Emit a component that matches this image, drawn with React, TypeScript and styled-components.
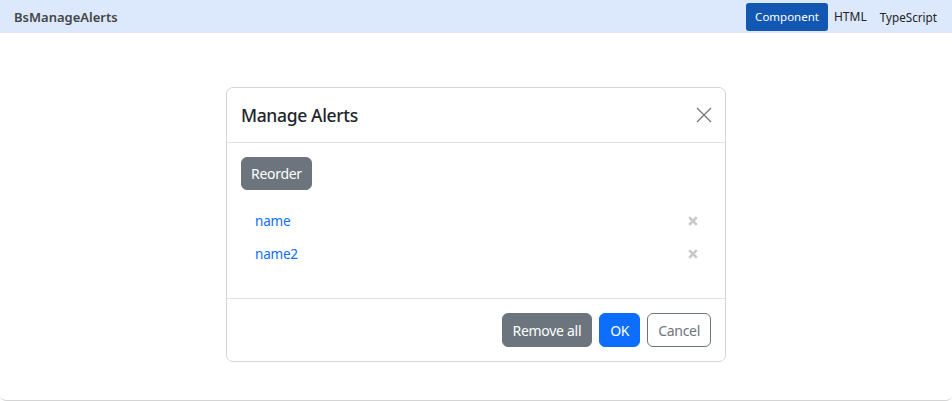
import React from "react";
import styled, { createGlobalStyle } from "styled-components";

const Global = createGlobalStyle`
  html, body { margin: 0; padding: 0; background: #fff; }
  body { font-family: "Segoe UI", "Noto Sans", "Open Sans", sans-serif; }
  * { box-sizing: border-box; }
`;

const Frame = styled.div`
  width: 952px;
  height: 401px;
  display: flex;
  flex-direction: column;
  border-bottom: 1px solid #d4d4d4;
  border-radius: 0 0 6px 6px;
  overflow: hidden;
`;

const TopBar = styled.div`
  height: 33px;
  background: #dce9fc;
  display: flex;
  align-items: center;
  justify-content: space-between;
  padding: 0 8px 0 14px;
`;

const AppTitle = styled.div`
  font-family: "Noto Sans", sans-serif;
  font-size: 13px;
  font-weight: 600;
  color: #454545;
`;

const Tabs = styled.div`
  display: flex;
  align-items: center;
`;

const Tab = styled.button<{ $active?: boolean }>`
  height: 28px;
  border: none;
  border-radius: 3px;
  padding: 0 ${(p) => (p.$active ? "9px" : "7px")};
  margin-left: ${(p) => (p.$active ? "0" : "-1px")};
  font-family: "Noto Sans", sans-serif;
  font-size: ${(p) => (p.$active ? "11.5px" : "12px")};
  font-weight: 400;
  background: ${(p) => (p.$active ? "#1257b1" : "transparent")};
  color: ${(p) => (p.$active ? "#fff" : "#222")};
  &:last-child { font-size: 11.7px; }
`;

const Stage = styled.div`
  flex: 1;
  display: flex;
  justify-content: center;
  align-items: flex-start;
  padding-top: 54px;
`;

const Modal = styled.div`
  width: 500px;
  border: 1px solid #d5d5d7;
  border-radius: 7px;
  background: #fff;
  display: flex;
  flex-direction: column;
  font-family: "Noto Sans", sans-serif;
`;

const Header = styled.div`
  height: 55px;
  display: flex;
  align-items: center;
  justify-content: space-between;
  padding: 0 13px 0 14px;
  border-bottom: 1px solid #dee2e6;
`;

const ModalTitle = styled.h5`
  margin: 0;
  font-size: 17.5px;
  letter-spacing: -0.35px;
  font-weight: 500;
  color: #212529;
`;

const CloseBtn = styled.button`
  width: 16px;
  height: 16px;
  padding: 0;
  border: none;
  background: transparent;
  display: flex;
  align-items: center;
  justify-content: center;
`;

const Body = styled.div`
  padding: 14px;
  display: flex;
  flex-direction: column;
  align-items: flex-start;
`;

const Btn = styled.button<{ $variant: "secondary" | "primary" | "outline" }>`
  height: 34px;
  padding: 0 10px;
  border-radius: 6px;
  font-family: inherit;
  font-size: 14px;
  letter-spacing: -0.3px;
  border: 1px solid ${(p) => (p.$variant === "primary" ? "#0d6efd" : "#6c757d")};
  background: ${(p) =>
    p.$variant === "primary" ? "#0d6efd" : p.$variant === "secondary" ? "#6c757d" : "#fff"};
  color: ${(p) => (p.$variant === "outline" ? "#6c757d" : "#fff")};
`;

const ReorderBtn = styled(Btn)`
  height: 33px;
  padding: 0 9px;
`;

const AlertList = styled.ul`
  list-style: none;
  margin: 14px 0;
  padding: 0;
  align-self: stretch;
`;

const AlertRow = styled.li`
  height: 33px;
  display: flex;
  align-items: center;
  justify-content: space-between;
  padding: 0 13px 0 14px;
`;

const AlertLink = styled.a`
  color: #0d6efd;
  font-size: 13.5px;
  letter-spacing: -0.2px;
  text-decoration: none;
`;

const RemoveIcon = styled.span`
  display: flex;
  width: 10px;
  height: 10px;
`;

const Footer = styled.div`
  border-top: 1px solid #dee2e6;
  display: flex;
  justify-content: flex-end;
  align-items: center;
  gap: 7px;
  padding: 14px 14px 14px 14px;
`;

const X = () => (
  <svg width="10" height="10" viewBox="0 0 10 10">
    <path d="M1.2 1.2 L8.8 8.8 M8.8 1.2 L1.2 8.8" stroke="#c9c9c9" strokeWidth="2.6" />
  </svg>
);

const CloseX = () => (
  <svg width="16" height="16" viewBox="0 0 16 16">
    <path d="M1 1 L15 15 M15 1 L1 15" stroke="#7a7a7a" strokeWidth="1.4" />
  </svg>
);

export default function App() {
  const alerts = ["name", "name2"];
  return (
    <>
      <Global />
      <Frame>
        <TopBar>
          <AppTitle>BsManageAlerts</AppTitle>
          <Tabs>
            <Tab $active>Component</Tab>
            <Tab>HTML</Tab>
            <Tab>TypeScript</Tab>
          </Tabs>
        </TopBar>
        <Stage>
          <Modal>
            <Header>
              <ModalTitle>Manage Alerts</ModalTitle>
              <CloseBtn aria-label="Close">
                <CloseX />
              </CloseBtn>
            </Header>
            <Body>
              <ReorderBtn $variant="secondary">Reorder</ReorderBtn>
              <AlertList>
                {alerts.map((a) => (
                  <AlertRow key={a}>
                    <AlertLink href="#">{a}</AlertLink>
                    <RemoveIcon>
                      <X />
                    </RemoveIcon>
                  </AlertRow>
                ))}
              </AlertList>
            </Body>
            <Footer>
              <Btn $variant="secondary">Remove all</Btn>
              <Btn $variant="primary">OK</Btn>
              <Btn $variant="outline">Cancel</Btn>
            </Footer>
          </Modal>
        </Stage>
      </Frame>
    </>
  );
}
